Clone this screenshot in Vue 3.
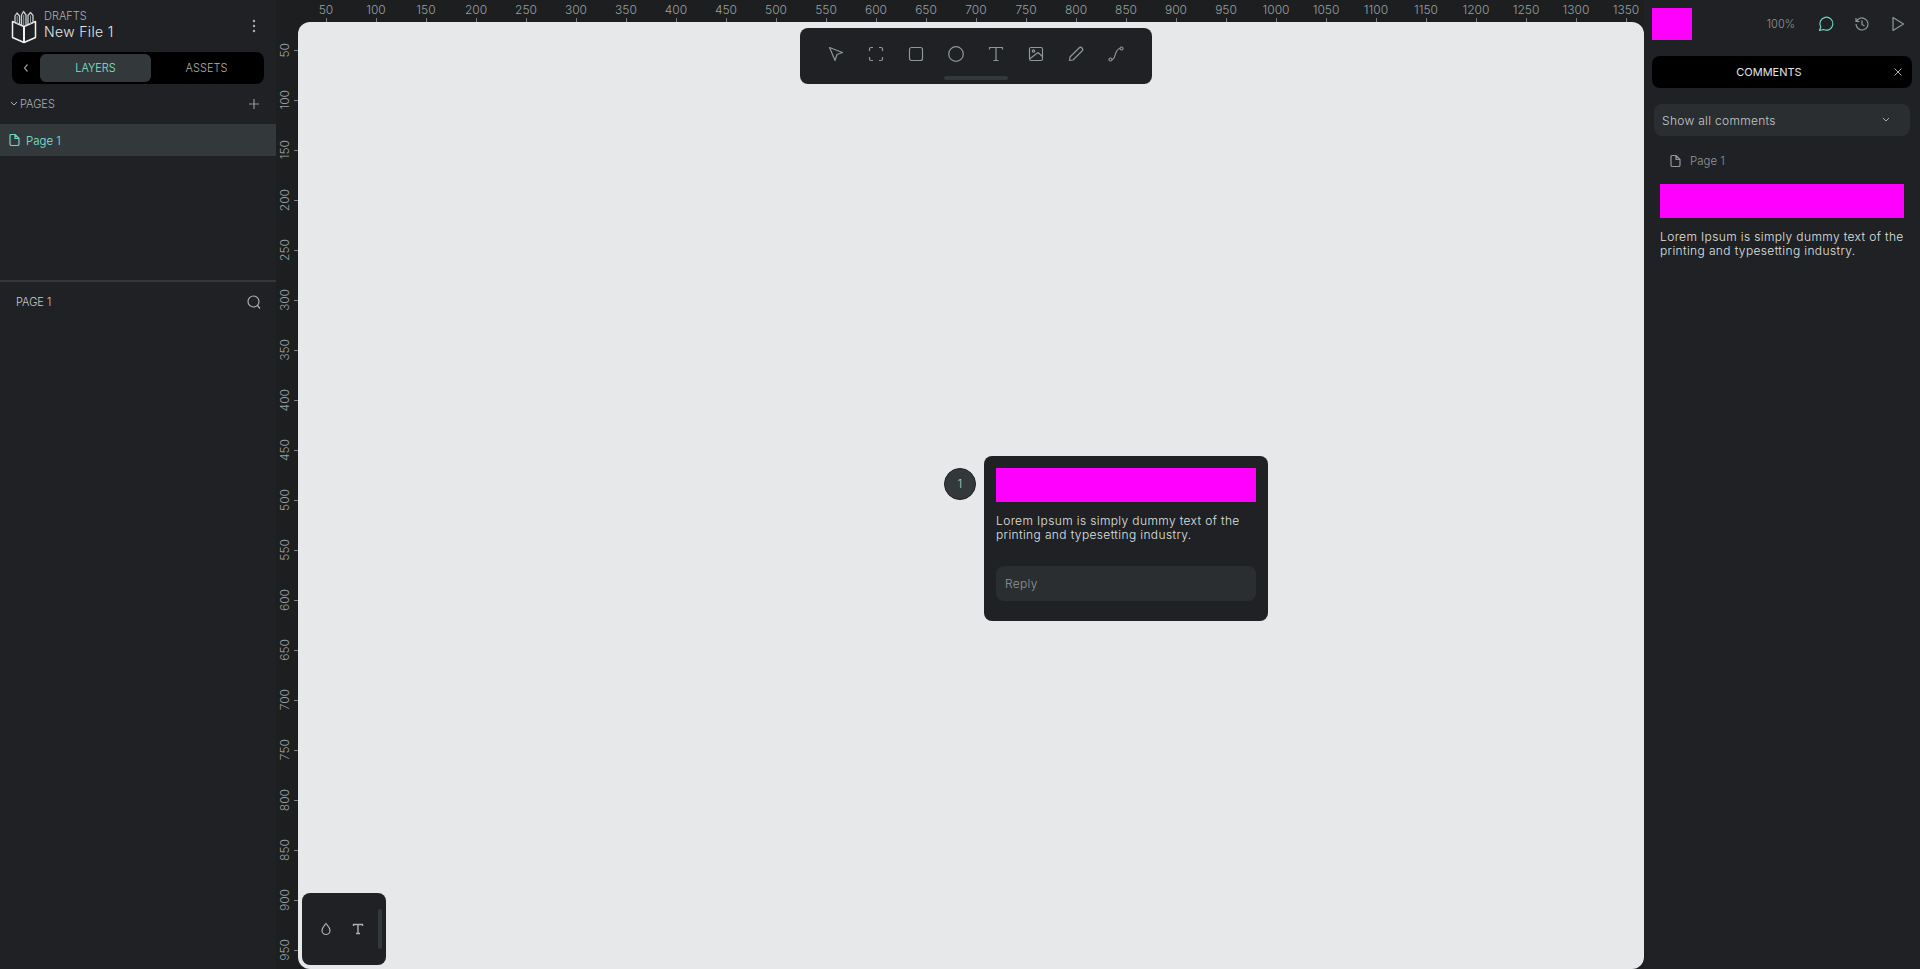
<script setup>
const hTicks = []
for (let v = 50; v <= 1350; v += 50) hTicks.push(v)
const vTicks = []
for (let v = 50; v <= 950; v += 50) vTicks.push(v)
</script>

<template>
  <div class="app">
    <aside class="left">
      <div class="file-head">
        <svg class="logo" width="26" height="34" viewBox="0 0 26 34" fill="none" stroke="#f0f2f2" stroke-width="1.300" stroke-linejoin="round">
          <path d="M1.500 11.500 13 16.500 24.500 11.500V27.500L13 32.500 1.500 27.500Z" stroke-width="1.500" />
          <path d="M13 16.500V32.500" stroke-width="2" />
          <path d="M4 13V6L6 3 8.500 6V14.500M10.500 15.500V5L12.500 1.500 15 5V15.500M17 14.500V5.500L19.500 2.500 22 5.500V13" stroke="#c9cecf" />
          <path d="M6.200 6V14M12.700 5V15.500M19.500 5.500V14" stroke="#8f979a" stroke-width="1" />
        </svg>
        <div class="file-names">
          <div class="drafts">DRAFTS</div>
          <div class="file-name">New File 1</div>
        </div>
        <svg class="kebab" width="4" height="14" viewBox="0 0 4 14" fill="#aab0b2"><circle cx="2" cy="2" r="1.200" /><circle cx="2" cy="7" r="1.200" /><circle cx="2" cy="12" r="1.200" /></svg>
      </div>

      <div class="tabs">
        <svg class="back" width="6" height="10" viewBox="0 0 6 10" fill="none" stroke="#8f979a" stroke-width="1.200"><path d="M4.500 1.500 1.500 5l3 3.500" /></svg>
        <div class="tab active">LAYERS</div>
        <div class="tab">ASSETS</div>
      </div>

      <div class="pages-head">
        <svg width="8" height="6" viewBox="0 0 8 6" fill="none" stroke="#aab0b2" stroke-width="1"><path d="M1 1l3 3 3-3" /></svg>
        <span>PAGES</span>
        <svg class="plus" width="12" height="12" viewBox="0 0 12 12" stroke="#8f979a" stroke-width="1.200"><path d="M6 1v10M1 6h10" /></svg>
      </div>

      <div class="page-row">
        <svg width="11" height="12" viewBox="0 0 11 12" fill="none" stroke="#72d6c2" stroke-width="1.200" stroke-linejoin="round"><path d="M1 1.500a1 1 0 0 1 1-1h4l4 4v5.500a1.500 1.500 0 0 1-1.500 1.500h-6A1.500 1.500 0 0 1 1 10ZM6 .5v4h4" /></svg>
        <span>Page 1</span>
      </div>

      <div class="divider"></div>

      <div class="layers-head">
        <span>PAGE 1</span>
        <svg width="14" height="14" viewBox="0 0 14 14" fill="none" stroke="#aab0b2" stroke-width="1.200"><circle cx="6.500" cy="6.500" r="5.500" /><path d="M10.500 10.500 13 13.500" /></svg>
      </div>
    </aside>

    <main class="center">
      <div class="corner"></div>
      <div class="ruler-h">
        <div v-for="v in hTicks" :key="v" class="h-tick">
          <span>{{ v }}</span>
          <i></i>
        </div>
      </div>
      <div class="ruler-v">
        <div v-for="v in vTicks" :key="v" class="v-tick">
          <span>{{ v }}</span>
          <i></i>
        </div>
      </div>

      <div class="viewport">
        <div class="toolbar">
          <div class="tools">
            <svg viewBox="0 0 16 16"><path d="M1.500 1.500 14.500 6.500 9 8.500 7 14.500Z" /></svg>
            <svg viewBox="0 0 16 16"><path d="M5 1.500H3A1.500 1.500 0 0 0 1.500 3v2M11 1.500h2A1.500 1.500 0 0 1 14.500 3v2M5 14.500H3A1.500 1.500 0 0 1 1.500 13v-2M11 14.500h2a1.500 1.500 0 0 0 1.500-1.500v-2" /></svg>
            <svg viewBox="0 0 16 16"><rect x="1.500" y="1.500" width="13" height="13" rx="2" /></svg>
            <svg viewBox="0 0 16 16"><circle cx="8" cy="8" r="7.300" /></svg>
            <svg viewBox="0 0 16 16"><path d="M1.500 3.500V1.500h13v2M8 1.500v13M5.500 14.500h5" /></svg>
            <svg viewBox="0 0 16 16"><rect x="1.500" y="1.500" width="13" height="13" rx="1.500" /><circle cx="5.500" cy="5" r="1.200" /><path d="M1.500 13 10 6.500l4.500 4" /></svg>
            <svg viewBox="0 0 16 16"><path d="M1.500 14.500 2 11 11 2a1.800 1.800 0 0 1 3 3L5 14Z" /></svg>
            <svg viewBox="0 0 16 16"><circle cx="2.500" cy="13.500" r="1.500" /><circle cx="13.500" cy="2.500" r="1.500" /><path d="M4 13.500C8 13.500 6.500 2.500 12 2.500" /></svg>
          </div>
          <div class="handle"></div>
        </div>

        <div class="comment">
          <div class="pin">1</div>
          <div class="comment-card">
            <div class="magenta card-bar"></div>
            <p class="lorem">Lorem Ipsum is simply dummy text of the printing and typesetting industry.</p>
            <div class="reply">Reply</div>
          </div>
        </div>

        <div class="props">
          <div class="props-icons">
            <svg width="12" height="14" viewBox="0 0 12 14" fill="none" stroke="#aab0b2" stroke-width="1.200"><path d="M6 1.500C4.500 3.500 2 5.500 2 8.500a4 4 0 0 0 8 0C10 5.500 7.500 3.500 6 1.500Z" /></svg>
            <svg width="12" height="12" viewBox="0 0 12 12" fill="none" stroke="#aab0b2" stroke-width="1.400"><path d="M1.500 3V1.500h9V3M6 1.500V10.500M4 10.500h4" /></svg>
          </div>
          <div class="props-scroll"></div>
        </div>
      </div>
    </main>

    <aside class="right">
      <div class="top-bar">
        <div class="magenta swatch"></div>
        <span class="zoom">100%</span>
        <svg width="18" height="18" viewBox="0 0 18 18" fill="none" stroke="#72d6c2" stroke-width="1.200" stroke-linejoin="round"><path d="M2.500 15.500l1.300-3.500A6.500 6.500 0 1 1 6.500 14.500Z" /></svg>
        <svg width="18" height="18" viewBox="0 0 18 18" fill="none" stroke="#8f979a" stroke-width="1.200"><path d="M3 9a6 6 0 1 0 2-4.500L3 6.500M3 3V6.500H6.500M9 5.500v4l2.500 1.500" /></svg>
        <svg width="18" height="18" viewBox="0 0 18 18" fill="none" stroke="#8f979a" stroke-width="1.200" stroke-linejoin="round"><path d="M4 2.500v13l10.500-6.500Z" /></svg>
      </div>

      <div class="comments-bar">
        <span>COMMENTS</span>
        <svg width="10" height="10" viewBox="0 0 10 10" stroke="#aab0b2" stroke-width="1"><path d="M1.500 1.500l7 7M8.500 1.500l-7 7" /></svg>
      </div>

      <div class="dropdown">
        <span>Show all comments</span>
        <svg width="8" height="6" viewBox="0 0 8 6" fill="none" stroke="#aab0b2" stroke-width="1"><path d="M1 1l3 3 3-3" /></svg>
      </div>

      <div class="thread-page">
        <svg width="11" height="12" viewBox="0 0 11 12" fill="none" stroke="#8f979a" stroke-width="1.200" stroke-linejoin="round"><path d="M1 1.500a1 1 0 0 1 1-1h4l4 4v5.500a1.500 1.500 0 0 1-1.500 1.500h-6A1.500 1.500 0 0 1 1 10ZM6 .5v4h4" /></svg>
        <span>Page 1</span>
      </div>

      <div class="thread">
        <div class="magenta thread-bar"></div>
        <p class="lorem">Lorem Ipsum is simply dummy text of the printing and typesetting industry.</p>
      </div>
    </aside>
  </div>
</template>

<style scoped>
.app {
  display: flex;
  width: 1920px;
  height: 969px;
  overflow: hidden;
  background: #1f2124;
  color: #e3e6e6;
  font-family: Inter, "Open Sans", sans-serif;
  font-size: 12px;
  font-weight: 300;
}

.left {
  width: 276px;
  flex: none;
}

.file-head {
  display: flex;
  align-items: center;
  height: 52px;
  padding: 0 20px 3px 11px;
  box-sizing: border-box;
}

.logo {
  margin: 5px 7px 0 0;
}

.kebab {
  margin-top: 3px;
}

.file-names {
  flex: 1;
}

.drafts {
  margin-top: 1px;
  color: #aab0b2;
  font-size: 11px;
  line-height: 14px;
}

.file-name {
  font-size: 14px;
  line-height: 18px;
  letter-spacing: 0.35px;
}

.tabs {
  display: flex;
  align-items: center;
  margin: 0 12px;
  height: 32px;
  padding: 0 2px;
  background: #000;
  border-radius: 8px;
}

.back {
  margin: 0 11px 0 9px;
}

.tab {
  flex: 1;
  height: 28px;
  line-height: 28px;
  text-align: center;
  font-size: 11px;
  color: #aab0b2;
  border-radius: 6px;
}

.tab.active {
  color: #7de8da;
  background: #33393b;
}

.pages-head {
  display: flex;
  align-items: center;
  gap: 2px;
  height: 40px;
  padding: 0 16px 0 10px;
  font-size: 11px;
  color: #aab0b2;
}

.plus {
  margin-left: auto;
}

.page-row {
  display: flex;
  align-items: center;
  gap: 6px;
  height: 32px;
  padding-left: 9px;
  background: #33393b;
  color: #7de8da;
  font-size: 11.500px;
}

.page-row span {
  padding-top: 2px;
}

.divider {
  height: 2px;
  margin-top: 124px;
  background: #33393b;
}

.layers-head {
  display: flex;
  align-items: center;
  justify-content: space-between;
  height: 40px;
  padding: 0 15px 0 16px;
  font-size: 11px;
  color: #c5cacb;
}

.center {
  flex: 1;
  display: grid;
  grid-template-columns: 22px 1fr;
  grid-template-rows: 22px 1fr;
  min-width: 0;
  background: #1c1e20;
}

.ruler-h {
  display: flex;
  overflow: hidden;
  padding-left: 3px;
}

.h-tick {
  flex: none;
  width: 50px;
  height: 22px;
  display: flex;
  flex-direction: column;
  align-items: center;
  justify-content: flex-end;
}

.h-tick span {
  color: #9aa1a4;
  line-height: 14px;
  margin-bottom: 1px;
}

.h-tick i {
  width: 1px;
  height: 4px;
  background: #7b8285;
}

.ruler-v {
  display: flex;
  flex-direction: column;
  overflow: hidden;
  padding-top: 3px;
  height: 947px;
  box-sizing: border-box;
}

.v-tick {
  flex: none;
  height: 50px;
  display: flex;
  align-items: center;
  justify-content: flex-end;
}

.v-tick span {
  writing-mode: vertical-rl;
  transform: rotate(180deg);
  color: #9aa1a4;
  line-height: 14px;
  margin-right: 2px;
}

.v-tick i {
  width: 4px;
  height: 1px;
  background: #7b8285;
}

.viewport {
  position: relative;
  background: #e6e8ea;
  border-radius: 12px;
}

.toolbar {
  position: absolute;
  left: 502px;
  top: 6px;
  width: 352px;
  height: 56px;
  box-sizing: border-box;
  background: #1f2124;
  border-radius: 8px;
  display: flex;
  flex-direction: column;
  align-items: center;
}

.tools {
  display: flex;
  gap: 24px;
  margin-top: 18px;
}

.tools svg {
  width: 16px;
  height: 16px;
  fill: none;
  stroke: #8f979a;
  stroke-width: 1.200;
  stroke-linejoin: round;
}

.handle {
  width: 64px;
  height: 4px;
  margin-top: 14px;
  border-radius: 2px;
  background: #33393b;
}

.comment {
  position: absolute;
  left: 646px;
  top: 434px;
  display: flex;
  align-items: flex-start;
  gap: 8px;
}

.pin {
  width: 32px;
  height: 32px;
  margin-top: 12px;
  box-sizing: border-box;
  border: 1px solid #1f2124;
  border-radius: 50%;
  background: #33393b;
  color: #c5cacb;
  font-size: 11px;
  line-height: 30px;
  text-align: center;
}

.comment-card {
  width: 284px;
  height: 165px;
  box-sizing: border-box;
  padding: 12px;
  background: #1f2124;
  border-radius: 8px;
}

.magenta {
  background: #f0f;
}

.card-bar {
  height: 34px;
}

.lorem {
  margin: 12px 0 0;
  font-size: 12px;
  line-height: 14px;
  letter-spacing: 0.37px;
  color: #dfe3e3;
}

.reply {
  height: 35px;
  margin-top: 24px;
  padding-left: 9px;
  line-height: 35px;
  letter-spacing: 0.3px;
  border-radius: 8px;
  background: #2a2e30;
  color: #8f979a;
}

.props {
  position: absolute;
  left: 4px;
  bottom: 4px;
  width: 84px;
  height: 72px;
  box-sizing: border-box;
  background: #1f2124;
  border-radius: 8px;
  display: flex;
  align-items: center;
  padding: 0 4px 0 18px;
}

.props-icons {
  flex: 1;
  display: flex;
  align-items: center;
  gap: 20px;
}

.props-scroll {
  width: 4px;
  height: 40px;
  border-radius: 2px;
  background: #33393b;
}

.right {
  width: 276px;
  flex: none;
}

.top-bar {
  display: flex;
  align-items: center;
  height: 48px;
  padding: 0 13px 0 8px;
  box-sizing: border-box;
  gap: 18px;
}

.swatch {
  width: 40px;
  height: 32px;
  margin-right: auto;
}

.zoom {
  color: #8f979a;
  font-size: 11px;
  margin-right: 4px;
}

.comments-bar {
  position: relative;
  display: flex;
  align-items: center;
  justify-content: center;
  height: 32px;
  margin: 8px 8px 0;
  padding-right: 26px;
  box-sizing: border-box;
  background: #000;
  border-radius: 8px;
  font-size: 11px;
  font-weight: 400;
}

.comments-bar svg {
  position: absolute;
  right: 9px;
}

.dropdown {
  display: flex;
  align-items: center;
  justify-content: space-between;
  height: 32px;
  margin: 16px 10px 0;
  padding: 0 20px 0 8px;
  background: #2a2e30;
  border-radius: 8px;
  letter-spacing: 0.3px;
  color: #c5cacb;
}

.thread-page {
  display: flex;
  align-items: center;
  gap: 9px;
  margin: 18px 0 0 26px;
  height: 14px;
  font-size: 11.500px;
  color: #8f979a;
}

.thread {
  margin: 16px 16px 0;
}

.thread-bar {
  height: 34px;
}
</style>

<style>
html, body {
  background: #1f2124;
  overflow: hidden;
}
</style>
